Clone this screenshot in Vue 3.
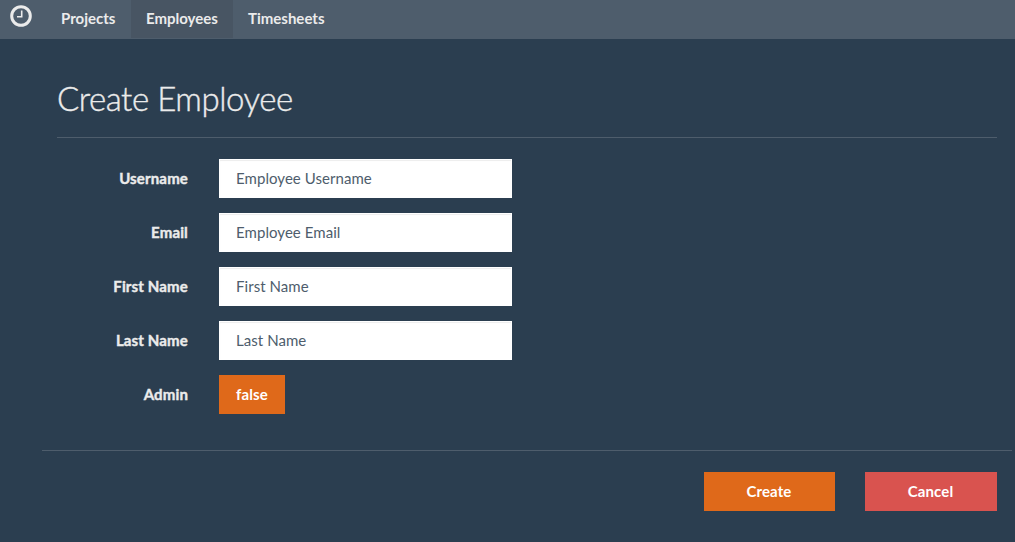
<script setup>
const navigation = ['Projects', 'Employees', 'Timesheets']
const fields = [
  ['Username', 'Employee Username'],
  ['Email', 'Employee Email'],
  ['First Name', 'First Name'],
  ['Last Name', 'Last Name'],
]
</script>

<template>
  <div class="page">
    <nav class="navbar">
      <a class="brand" aria-label="Home">
        <svg width="22" height="22" viewBox="0 0 22 22" fill="none" stroke="#ebebeb">
          <circle cx="11" cy="11" r="9.3" stroke-width="3" />
          <path d="M11.7 5.5V11.8H7" stroke-width="1.6" />
        </svg>
      </a>
      <a v-for="item in navigation" :key="item" class="link" :class="{ active: item === 'Employees' }">{{ item }}</a>
    </nav>
    <main>
      <h1>Create Employee</h1>
      <form @submit.prevent>
        <div v-for="field in fields" :key="field[0]" class="row">
          <label>{{ field[0] }}</label>
          <input type="text" :placeholder="field[1]" :aria-label="field[0]" />
        </div>
        <div class="row">
          <label>Admin</label>
          <button type="button" class="toggle">false</button>
        </div>
      </form>
    </main>
    <footer>
      <button class="create">Create</button>
      <button class="cancel">Cancel</button>
    </footer>
  </div>
</template>

<style>
body { margin: 0; background: #2b3e50; }
</style>
<style scoped>
* { box-sizing: border-box; }
.page { height: 542px; overflow: hidden; background: #2b3e50; color: #ebebeb; font: 15px/21px Lato, sans-serif; }
.navbar { display: flex; height: 39px; background: #4e5d6c; }
.brand { width: 46px; padding: 5px 0 0 10px; }
.brand svg { display: block; }
.link { height: 38px; padding: 8px 15px 0; font-weight: 700; }
.link:nth-child(2) { width: 85px; }
.active { width: 102px; background: #485563; }
main { padding: 0 18px 0 57px; }
h1 { height: 99px; margin: 0 0 21px; padding-top: 39px; border-bottom: 1px solid #4e5d6c; font-size: 33px; line-height: 40px; font-weight: 300; letter-spacing: -.45px; -webkit-text-stroke: .4px #ebebeb; }
form { display: flow-root; margin-bottom: 21px; }
.row { display: flex; height: 39px; margin-bottom: 15px; }
label { width: 131px; margin-right: 31px; padding-top: 9px; text-align: right; font-weight: 700; letter-spacing: .15px; -webkit-text-stroke: .4px #ebebeb; }
input { width: 293px; height: 39px; border: 1px solid #fff; border-radius: 0; padding: 0 16px 2px; background: #fff; color: #2b3e50; font: 15px Lato, sans-serif; letter-spacing: .06px; outline: none; box-shadow: inset 0 1px 1px rgba(0, 0, 0, .075); }
input::placeholder { color: #4e5d6c; opacity: 1; }
button { height: 39px; padding: 0 1px 2px 0; border: 0; color: #fff; font: 700 15px Lato, sans-serif; letter-spacing: .1px; }
.toggle { width: 66px; padding-right: 0; background: #df691a; }
footer { display: flex; justify-content: flex-end; gap: 30px; margin: 0 3px 0 42px; padding: 21px 15px 0 0; border-top: 1px solid #4e5d6c; }
.create { width: 131px; background: #df691a; }
.cancel { width: 132px; background: #d9534f; }
</style>
